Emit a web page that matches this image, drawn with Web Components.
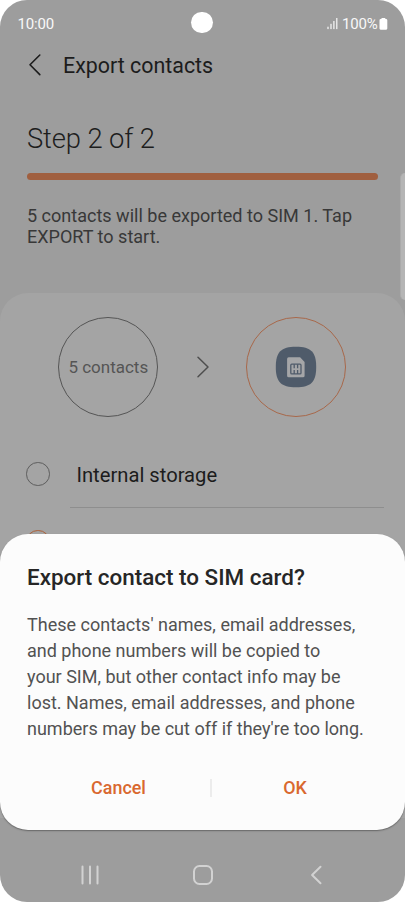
<!DOCTYPE html>
<html lang="en">
<head>
<meta charset="utf-8">
<title>Export contacts</title>
<style>
html,body{margin:0;background:#fff}
body{width:405px;height:902px;overflow:hidden;font-family:Roboto,"Liberation Sans",sans-serif}
</style>
</head>
<body>
<phone-screen>
  <status-bar slot="status"></status-bar>
  <app-header>Export contacts</app-header>
  <step-info heading="Step 2 of 2">5 contacts will be exported to SIM 1. Tap<br>EXPORT to start.</step-info>
  <target-panel>
    <transfer-flow slot="flow">5 contacts</transfer-flow>
    <storage-option divider>Internal storage</storage-option>
    <storage-option selected></storage-option>
  </target-panel>
  <confirm-dialog slot="over">
    <span slot="title">Export contact to SIM card?</span>
    These contacts' names, email addresses,<br>and phone numbers will be copied to<br>your SIM, but other contact info may be<br>lost. Names, email addresses, and phone<br>numbers may be cut off if they're too long.
    <dialog-button slot="cancel">Cancel</dialog-button>
    <dialog-button slot="ok">OK</dialog-button>
  </confirm-dialog>
  <nav-bar slot="nav"></nav-bar>
</phone-screen>
<script>
function element(name, markup, setup) {
  customElements.define(name, class extends HTMLElement {
    constructor() {
      super();
      this.attachShadow({mode: "open"}).innerHTML = markup;
    }
    connectedCallback() { if (setup) setup(this, this.shadowRoot); }
  });
}

element("phone-screen", `<style>
:host{display:grid;grid-template-rows:43px 1fr 84px;position:relative;width:405px;height:902px;overflow:hidden;background:#9d9d9d;border-radius:27px}
main{min-height:0;display:flex;flex-direction:column}
.edge{position:absolute;left:400px;top:173px;width:12px;height:127px;border-radius:5px;background:#b5b5b5;border-left:1px solid #aaa;box-sizing:border-box}
</style><slot name="status"></slot><main><slot></slot></main><slot name="nav"></slot><div class="edge"></div><slot name="over"></slot>`);

element("status-bar", `<style>
:host{display:grid;grid-template-columns:1fr 22px 1fr;align-items:center;padding:5px 17px 0 17px;color:#f8f8f8;font-size:15px}
.camera{width:21.6px;height:21.6px;border-radius:50%;background:#fff;margin:-3.4px 0 0 -.4px}
.right{display:flex;justify-content:flex-end;align-items:center}
.time{letter-spacing:-.15px;padding-left:.5px}
.pct{letter-spacing:-.2px}
svg{display:block}
.sig{margin-right:4.5px}.bat{margin-left:1.5px}
</style><span class="time">10:00</span><span class="camera"></span><span class="right">
<svg class="sig" width="11" height="12" viewBox="0 0 11 12" fill="#f8f8f8"><rect x=".4" y="8.7" width="1.2" height="2.4"/><rect x="3.4" y="5.8" width="1.2" height="5.3"/><rect x="6.3" y="3" width="1.2" height="8.1"/><rect x="9.2" y="0" width="1.2" height="11.1"/></svg><span class="pct">100%</span><svg class="bat" width="9" height="12" viewBox="0 0 9 12" fill="#fff"><path d="M2.5 1V0h3.8v1H7q1.3 0 1.3 1.3v8.3q0 1.1-1.1 1.1H1.6Q.5 11.7.5 10.6V2.3Q.5 1 1.8 1z"/></svg></span>`);

element("app-header", `<style>
:host{display:flex;align-items:center;height:46px;box-sizing:border-box;padding:0 0 1.5px 28px;color:#1c1c1c;font-size:21.4px}
svg{margin-right:21px}
</style><svg width="14" height="24" viewBox="0 0 14 24" fill="none" stroke="#1c1c1c" stroke-width="1.6" stroke-linecap="round" stroke-linejoin="round"><path d="M11.8 2 2 11.8 11.8 21.6"/></svg><slot></slot>`);

element("step-info", `<style>
:host{display:block;height:204px;padding:33px 27px 0;box-sizing:border-box;color:#383838;font-size:18.05px;line-height:21.4px}
h1{margin:0;font-size:27.4px;letter-spacing:-.12px;line-height:34px;font-weight:300;color:#1d1d1d}
.bar{height:7px;border-radius:4px;background:#a05f3f;margin:17px 0 24.8px}
</style><h1></h1><div class="bar"></div><slot></slot>`, (host, root) => {
  root.querySelector("h1").textContent = host.getAttribute("heading");
});

element("target-panel", `<style>
:host{display:block;flex:1;background:#a4a4a4;border-radius:28px 28px 0 0;box-sizing:border-box}
</style><slot name="flow"></slot><slot></slot>`);

element("transfer-flow", `<style>
:host{display:flex;align-items:center;justify-content:space-between;height:147px;padding:0 58.7px 0 58.3px}
.disc{width:100px;height:100px;box-sizing:border-box;border-radius:50%;border:1.3px solid #555;display:flex;align-items:center;justify-content:center;color:#555;font-size:17px}
.arrow{margin-left:1.5px}
.sim{border-color:#a8684a}
</style><div class="disc"><span><slot></slot></span></div>
<svg class="arrow" width="14" height="24" viewBox="0 0 14 24" fill="none" stroke="#4e4e4e" stroke-width="1.5" stroke-linecap="round" stroke-linejoin="round"><path d="M2 2.2 12 12 2 21.8"/></svg>
<div class="disc sim"><svg width="42" height="42" viewBox="0 0 42 42"><path fill="#4f5b6a" d="M21 .7C36 .7 41.2 6 41.2 21S36 41.3 21 41.3.8 36 .8 21 6 .7 21 .7z"/><path fill="#a5a6a8" d="M13.7 11.3h11.4l4.5 4.7v13.7q0 1.6-1.6 1.6H13.7q-1.6 0-1.6-1.6V12.9q0-1.6 1.6-1.6z"/><g fill="none" stroke="#4f5b6a" stroke-width="1.3"><rect x="15.8" y="18.2" width="10.2" height="9.7" rx="1"/><path d="M19.2 18.2v4M22.6 18.2v4M19.2 24v4M22.6 24v4"/></g></svg></div>`);

element("storage-option", `<style>
:host{display:flex;height:68px;padding:0 21px 0 26.3px;align-items:stretch;color:#1c1c1c;font-size:20.2px}
.radio{width:23.5px;height:23.5px;box-sizing:border-box;border-radius:50%;border:1.3px solid #5d5d5d;align-self:center;margin-right:20.2px}
.label{flex:1;display:flex;align-items:center;padding-left:6.5px;box-sizing:border-box;border-bottom:1px solid transparent;padding-top:2px}
:host([divider]) .label{border-color:#8e8e8e}
:host([selected]) .radio{border-color:#ac6038}
</style><span class="radio"></span><span class="label"><span><slot></slot></span></span>`);

element("confirm-dialog", `<style>
:host{position:absolute;left:0;top:533.5px;width:405px;height:296px;box-sizing:border-box;padding:29.5px 27px 0;background:#fcfcfc;border-radius:28px;box-shadow:0 1px 1.5px rgba(0,0,0,.35);color:#525252;font-size:18px;line-height:26px}
h2{margin:0 0 19.7px;color:#262626;font-size:22.45px;line-height:29px;font-weight:500}
.actions{display:grid;grid-template-columns:183px 2px 1fr;align-items:center;margin:27px 0 0;height:38px}
.line{height:18px;background:#ececec}
p{margin:0;white-space:nowrap}
</style><h2><slot name="title"></slot></h2><p><slot></slot></p><div class="actions"><slot name="cancel"></slot><span class="line"></span><slot name="ok"></slot></div>`);

element("dialog-button", `<style>
:host{display:block;text-align:center;color:#d9682f;font-size:17.9px;font-weight:500}
</style><slot></slot>`);

element("nav-bar", `<style>
:host{display:flex;justify-content:space-between;align-items:center;padding:30px 82px 0 79.5px}
.home{margin-right:3px}
svg{display:block}
</style>
<svg width="20" height="20" viewBox="0 0 20 20" stroke="#d2d2d2" stroke-width="2" stroke-linecap="round"><path d="M2.5 1.5v17M10 1.5v17M17.5 1.5v17"/></svg>
<svg class="home" width="22" height="22" viewBox="0 0 22 22" fill="none" stroke="#d2d2d2" stroke-width="2"><rect x="2" y="2" width="18" height="18" rx="5.5"/></svg>
<svg width="14" height="20" viewBox="0 0 14 20" fill="none" stroke="#d2d2d2" stroke-width="2" stroke-linecap="round" stroke-linejoin="round"><path d="M11.5 1.8 3.1 10 11.5 18.2"/></svg>`);
</script>
</body>
</html>
